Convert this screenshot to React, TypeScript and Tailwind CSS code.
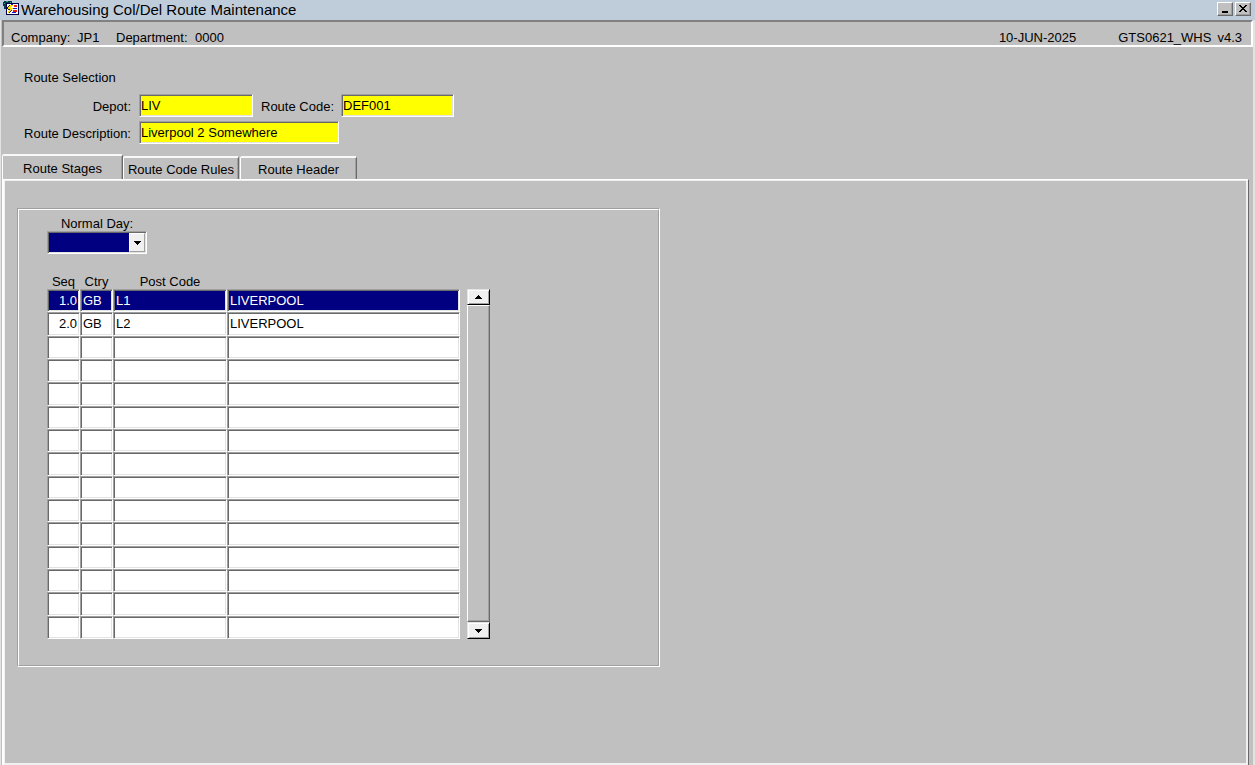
import React from "react";

const sunken =
  "border border-t-[#a0a0a0] border-l-[#a0a0a0] border-r-white border-b-white shadow-[inset_1px_1px_0_#696969,inset_-1px_-1px_0_#e3e3e3]";

const raised =
  "border border-t-white border-l-white border-r-[#696969] border-b-[#696969] shadow-[inset_-1px_-1px_0_#a0a0a0]";

const scrollButton =
  "flex shrink-0 items-center justify-center border bg-[#f0f0f0] border-t-[#e3e3e3] border-l-[#e3e3e3] border-r-black border-b-black shadow-[inset_1px_1px_0_#ffffff,inset_-1px_-1px_0_#a0a0a0]";

type Stage = { seq: string; ctry: string; postCode: string; place: string };

const stages: Stage[] = [
  { seq: "1.0", ctry: "GB", postCode: "L1", place: "LIVERPOOL" },
  { seq: "2.0", ctry: "GB", postCode: "L2", place: "LIVERPOOL" },
];

const emptyStage: Stage = { seq: "", ctry: "", postCode: "", place: "" };
const rows: Stage[] = Array.from({ length: 15 }, (_, i) => stages[i] ?? emptyStage);

function AppIcon() {
  return (
    <svg width="16" height="16" viewBox="0 0 16 16" shapeRendering="crispEdges" aria-hidden="true">
      <path d="M1 1h8v3h-8zM0 2h3v4h-3zM1 6h2v3h-2z" fill="#0c3a44" />
      <path d="M3 1h2v1h-2zM1 3h1v1h-1zM7 2h1v1h-1z" fill="#30a090" />
      <rect x="3" y="3" width="13" height="12" fill="#000050" />
      <rect x="4" y="4" width="11" height="10" fill="#ffffff" />
      <path d="M11 5h3v2h-3zM10 10h4v2h-4z" fill="#e81818" />
      <path d="M10 8h4v1h-4zM9 12h4v1h-4zM8 4h2v1h-2z" fill="#1818d0" />
      <path d="M7 5h3v1h-3zM6 6h3v1h-3zM5 7h3v1h-3zM5 8h5v1h-5zM7 9h2v1h-2zM6 10h2v1h-2zM5 11h2v1h-2zM5 12h1v1h-1z" fill="#ffe000" />
      <path d="M6 5h1v1h-1zM5 6h1v1h-1zM4 7h1v2h-1zM5 9h2v1h-2zM8 10h1v1h-1zM7 11h1v1h-1zM6 12h1v1h-1z" fill="#202020" />
    </svg>
  );
}

function Triangle({ up = false }: { up?: boolean }) {
  return (
    <svg width="7" height="4" viewBox="0 0 7 4" shapeRendering="crispEdges" aria-hidden="true">
      <path d={up ? "M3 0h1v1h1v1h1v1h1v1h-7v-1h1v-1h1v-1h1z" : "M0 0h7v1h-1v1h-1v1h-1v1h-1v-1h-1v-1h-1v-1h-1z"} fill="#000" />
    </svg>
  );
}

function TitleBar() {
  const button =
    "flex h-[14px] w-4 items-center justify-center bg-[#c0c0c0] border border-t-white border-l-white border-r-[#696969] border-b-[#696969] shadow-[inset_-1px_-1px_0_#a0a0a0]";
  return (
    <header className="flex h-5 items-center justify-between bg-[#bfcddb] pl-[3px] pr-1">
      <div className="flex items-start gap-0.5">
        <AppIcon />
        <h1 className="text-[15px] leading-5">Warehousing Col/Del Route Maintenance</h1>
      </div>
      <div className="flex gap-0.5 pb-0.5">
        <button type="button" aria-label="Minimize" className={button}>
          <svg width="8" height="8" viewBox="0 0 8 8" shapeRendering="crispEdges" aria-hidden="true">
            <rect x="1" y="6" width="6" height="2" fill="#000" />
          </svg>
        </button>
        <button type="button" aria-label="Close" className={button}>
          <svg width="8" height="8" viewBox="0 0 8 8" shapeRendering="crispEdges" aria-hidden="true">
            <path d="M0 0h2v1h1v1h2v-1h1v-1h2v1h-1v1h-1v1h-1v1h1v1h1v1h1v1h-2v-1h-1v-1h-2v1h-1v1h-2v-1h1v-1h1v-1h1v-1h-1v-1h-1v-1h-1z" fill="#000" />
          </svg>
        </button>
      </div>
    </header>
  );
}

function StatusBar() {
  return (
    <div className="ml-px flex h-[27px] items-end justify-between border-2 border-t-[#808080] border-l-[#808080] border-r-white border-b-white pl-[7px] pr-[9px] leading-[14px]">
      <div className="flex">
        <span className="w-[66px]">Company:</span>
        <span className="w-[39px]">JP1</span>
        <span className="w-[79px]">Department:</span>
        <span>0000</span>
      </div>
      <div className="flex">
        <span className="mr-[42px]">10-JUN-2025</span>
        <span className="mr-1.5">GTS0621_WHS</span>
        <span>v4.3</span>
      </div>
    </div>
  );
}

function RouteSelection() {
  const field = `h-[23px] bg-[#ffff00] px-px pb-px outline-none ${sunken}`;
  return (
    <section className="px-[23px] pt-[23px] pb-[10px]">
      <h2 className="mb-2 leading-4">Route Selection</h2>
      <div className="flex flex-col gap-1">
        <div className="flex items-center">
          <label htmlFor="depot" className="w-[107px] pt-[3px] text-right leading-5">Depot:</label>
          <input id="depot" defaultValue="LIV" className={`ml-2 w-[114px] ${field}`} />
          <label htmlFor="route-code" className="ml-2 w-20 whitespace-nowrap pt-[3px] leading-5">Route Code:</label>
          <input id="route-code" defaultValue="DEF001" className={`w-[113px] ${field}`} />
        </div>
        <div className="flex items-center">
          <label htmlFor="route-description" className="w-[107px] whitespace-nowrap pt-[3px] text-right leading-5">Route Description:</label>
          <input id="route-description" defaultValue="Liverpool 2 Somewhere" className={`ml-2 w-[200px] ${field}`} />
        </div>
      </div>
    </section>
  );
}

function Tabs() {
  const tab =
    "border-t-2 border-l border-r border-t-[#f8f8f8] border-l-white border-r-[#696969] shadow-[inset_-1px_0_0_#a0a0a0] rounded-t-[2px] whitespace-nowrap pt-0.5";
  return (
    <div role="tablist" className="flex items-end pl-px">
      <button type="button" role="tab" aria-selected="true" className={`h-[25px] w-[121px] ${tab}`}>Route Stages</button>
      <button type="button" role="tab" aria-selected="false" className={`h-[23px] w-[116px] ${tab}`}>Route Code Rules</button>
      <button type="button" role="tab" aria-selected="false" className={`ml-px h-[23px] w-[117px] ${tab}`}>Route Header</button>
    </div>
  );
}

function StageTable() {
  const head = "p-0 font-normal leading-[14px]";
  return (
    <table className="h-[364px] w-[413px] table-fixed border-separate border-spacing-0">
      <thead>
        <tr className="h-[14px]">
          <th className={`w-[33px] ${head}`}>Seq</th>
          <th className={`w-[33px] ${head}`}>Ctry</th>
          <th className={`w-[114px] ${head}`}>Post Code</th>
          <th className={head} aria-label="Place"></th>
        </tr>
      </thead>
      <tbody>
        {rows.map((row, i) => {
          const tone = i === 0 ? "bg-[#000080] text-white" : "bg-white text-black";
          const cell = `p-px ${sunken} ${tone}`;
          const input = "block h-[19px] w-full bg-transparent outline-none";
          return (
            <tr key={i}>
              <td className={cell}>
                <input aria-label={`Seq ${i + 1}`} defaultValue={row.seq} className={`pr-px text-right ${input}`} />
              </td>
              <td className={cell}>
                <input aria-label={`Ctry ${i + 1}`} defaultValue={row.ctry} className={`pl-px ${input}`} />
              </td>
              <td className={cell}>
                <input aria-label={`Post Code ${i + 1}`} defaultValue={row.postCode} className={`pl-px ${input}`} />
              </td>
              <td className={cell}>
                <input aria-label={`Place ${i + 1}`} defaultValue={row.place} className={`pl-px ${input}`} />
              </td>
            </tr>
          );
        })}
      </tbody>
    </table>
  );
}

function ScrollBar() {
  return (
    <div className="ml-[7px] mt-[14px] flex w-[23px] flex-col">
      <button type="button" aria-label="Scroll up" className={`h-4 ${scrollButton}`}>
        <Triangle up />
      </button>
      <div className={`flex-1 ${raised}`} />
      <button type="button" aria-label="Scroll down" className={`h-[17px] ${scrollButton}`}>
        <Triangle />
      </button>
    </div>
  );
}

function StagesPanel() {
  return (
    <main className="ml-px mr-1 flex flex-1 flex-col border-t border-l-2 border-r border-t-white border-l-white border-r-[#696969]">
      <div className="flex-1 border-t border-r-2 border-b-2 border-l border-[#f0f0f0] px-3 pt-[27px]">
        <div className="w-[643px] border border-t-[#a0a0a0] border-l-[#a0a0a0] border-r-white border-b-white">
          <div className="border border-t-white border-l-white border-r-[#a0a0a0] border-b-[#a0a0a0] pt-[7px] pb-[26px] pl-7">
            <label htmlFor="normal-day" className="block w-[100px] text-center leading-[14px]">Normal Day:</label>
            <div className={`relative h-[23px] w-[100px] p-px ${sunken}`}>
              <select id="normal-day" className="block h-full w-full appearance-none bg-[#000080] text-white outline-none">
                <option value=""></option>
              </select>
              <span className="pointer-events-none absolute right-px top-px bottom-px flex w-4 items-center justify-center border border-[#a0a0a0] border-t-white border-l-white bg-[#f0f0f0]">
                <Triangle />
              </span>
            </div>
            <div className="mt-[21px] flex">
              <StageTable />
              <ScrollBar />
            </div>
          </div>
        </div>
      </div>
    </main>
  );
}

export default function App() {
  return (
    <div className="flex min-h-screen flex-col bg-[#c0c0c0] font-['Liberation_Sans',Arial,sans-serif] text-[13px] text-black">
      <TitleBar />
      <div className="flex flex-1 flex-col border-l border-r-2 border-l-[#e3e3e3] border-r-[#e3e3e3]">
        <StatusBar />
        <RouteSelection />
        <Tabs />
        <StagesPanel />
      </div>
    </div>
  );
}
